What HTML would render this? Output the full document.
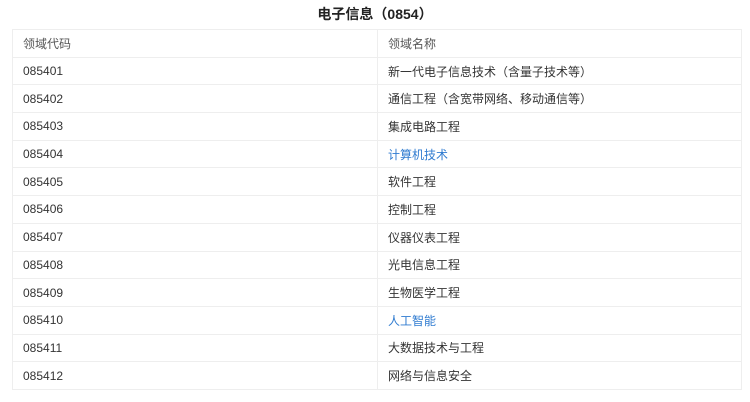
<!DOCTYPE html>
<html><head><meta charset="utf-8"><style>
body{margin:0;background:#fff;font-family:"Liberation Sans","Noto Sans CJK SC",sans-serif;color:#333;}
h3{margin:0;height:29px;line-height:29px;text-align:center;font-size:14px;font-weight:bold;color:#222;}
table{position:absolute;left:12px;top:29px;width:730px;border-collapse:collapse;font-size:12px;}
td{border:1px solid #eee;height:27.7px;padding:0 0 0 10px;box-sizing:border-box;}
td:first-child{width:365px;}
a{color:#2f7bd0;text-decoration:none;}
</style></head><body>
<h3>电子信息（0854）</h3>
<table>
<tr><td style="color:#555">领域代码</td><td style="color:#555">领域名称</td></tr>
<tr><td>085401</td><td>新一代电子信息技术（含量子技术等）</td></tr>
<tr><td>085402</td><td>通信工程（含宽带网络、移动通信等）</td></tr>
<tr><td>085403</td><td>集成电路工程</td></tr>
<tr><td>085404</td><td><a>计算机技术</a></td></tr>
<tr><td>085405</td><td>软件工程</td></tr>
<tr><td>085406</td><td>控制工程</td></tr>
<tr><td>085407</td><td>仪器仪表工程</td></tr>
<tr><td>085408</td><td>光电信息工程</td></tr>
<tr><td>085409</td><td>生物医学工程</td></tr>
<tr><td>085410</td><td><a>人工智能</a></td></tr>
<tr><td>085411</td><td>大数据技术与工程</td></tr>
<tr><td>085412</td><td>网络与信息安全</td></tr>
</table>
</body></html>
